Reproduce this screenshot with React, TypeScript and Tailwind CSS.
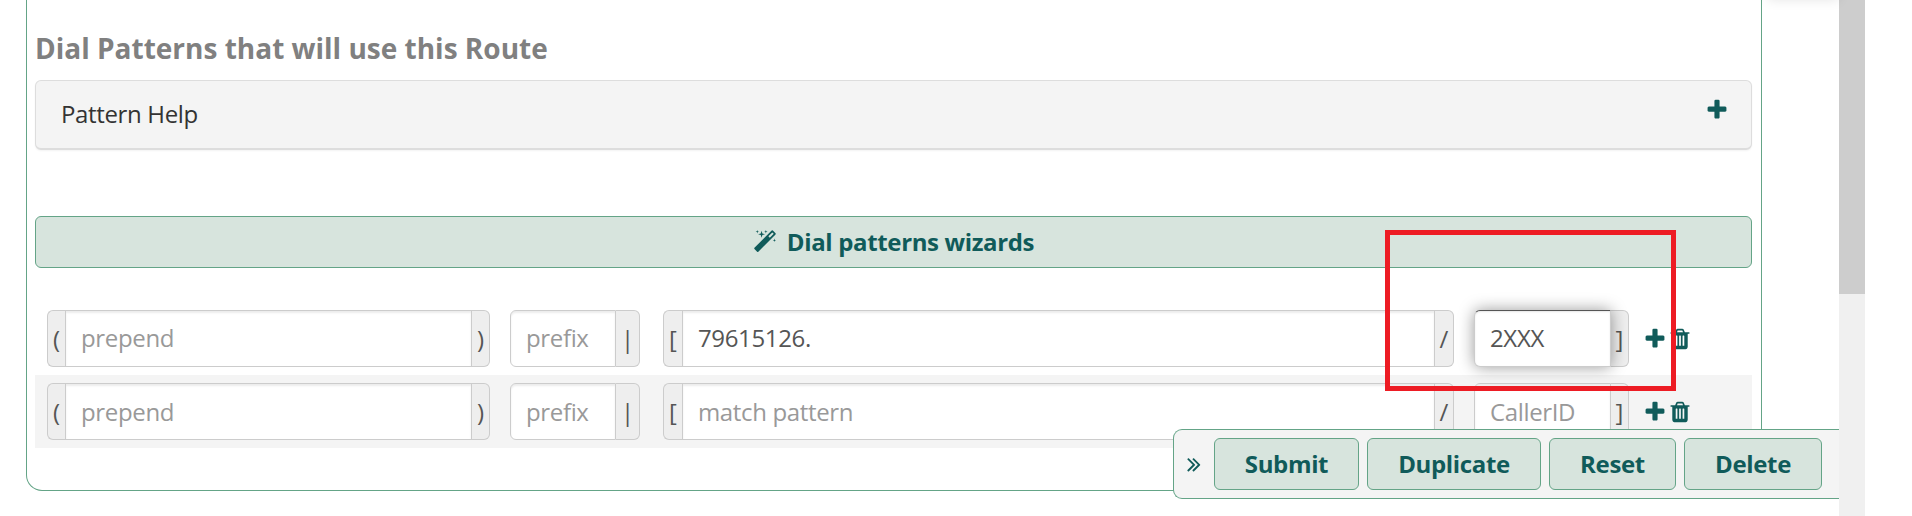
import React from 'react';
import clsx from 'clsx';

interface DialPattern {
  id: number;
  match?: string;
  callerId?: string;
  focused?: boolean;
}

const PATTERNS: DialPattern[] = [
  { id: 1, match: '79615126.', callerId: '2XXX', focused: true },
  { id: 2 },
];

const ACTIONS = [
  { label: 'Submit', width: 'w-[145px]' },
  { label: 'Duplicate', width: 'w-[174px]' },
  { label: 'Reset', width: 'w-[127px]' },
  { label: 'Delete', width: 'w-[138px]' },
];

const ICONS = {
  plus: 'M1600 736v192q0 40-28 68t-68 28h-416v416q0 40-28 68t-68 28h-192q-40 0-68-28t-28-68v-416h-416q-40 0-68-28t-28-68v-192q0-40 28-68t68-28h416v-416q0-40 28-68t68-28h192q40 0 68 28t28 68v416h416q40 0 68 28t28 68z',
  trash:
    'M704 1376v-704q0-14-9-23t-23-9h-64q-14 0-23 9t-9 23v704q0 14 9 23t23 9h64q14 0 23-9t9-23zm256 0v-704q0-14-9-23t-23-9h-64q-14 0-23 9t-9 23v704q0 14 9 23t23 9h64q14 0 23-9t9-23zm256 0v-704q0-14-9-23t-23-9h-64q-14 0-23 9t-9 23v704q0 14 9 23t23 9h64q14 0 23-9t9-23zm-544-992h448l-48-117q-7-9-17-11h-317q-10 2-17 11zm928 32v64q0 14-9 23t-23 9h-96v948q0 83-47 143.5t-113 60.5h-832q-66 0-113-58.5t-47-141.5v-952h-96q-14 0-23-9t-9-23v-64q0-14 9-23t23-9h309l70-167q15-37 54-63t79-26h320q40 0 79 26t54 63l70 167h309q14 0 23 9t9 23z',
  magic:
    'M1254 581l293-293-107-107-293 293zm447-293q0 27-18 45l-1286 1286q-18 18-45 18t-45-18l-198-198q-18-18-18-45t18-45l1286-1286q18-18 45-18t45 18l198 198q18 18 18 45zm-1351-190l98 30-98 30-30 98-30-98-98-30 98-30 30-98zm350 162l196 60-196 60-60 196-60-196-196-60 196-60 60-196zm930 478l98 30-98 30-30 98-30-98-98-30 98-30 30-98zm-640-640l98 30-98 30-30 98-30-98-98-30 98-30 30-98z',
  collapse:
    'M979 960q0 13-10 23l-466 466q-10 10-23 10t-23-10l-50-50q-10-10-10-23t10-23l393-393-393-393q-10-10-10-23t10-23l50-50q10-10 23-10t23 10l466 466q10 10 10 23zm384 0q0 13-10 23l-466 466q-10 10-23 10t-23-10l-50-50q-10-10-10-23t10-23l393-393-393-393q-10-10-10-23t10-23l50-50q10-10 23-10t23 10l466 466q10 10 10 23z',
};

function Icon({ name, className }: { name: keyof typeof ICONS; className?: string }) {
  return (
    <svg viewBox="0 0 1792 1792" className={clsx('w-6 h-6 shrink-0 fill-[#105b5a]', className)}>
      <path d={ICONS[name]} />
    </svg>
  );
}

interface FieldProps {
  className: string;
  placeholder: string;
  before?: string;
  after: string;
  value?: string;
  focused?: boolean;
  beforeWidth?: string;
  afterWidth?: string;
  inputClassName?: string;
}

function Field({
  className,
  placeholder,
  before,
  after,
  value,
  focused,
  beforeWidth = 'w-[19px]',
  afterWidth = 'w-[19px]',
  inputClassName,
}: FieldProps) {
  return (
    <div className={clsx('flex h-[57px] shrink-0', className)}>
      {before && (
        <span
          className={clsx(
            'shrink-0 flex items-center justify-center pt-px border border-r-0 border-[#ccc] rounded-l-[6px] bg-[#eee] text-[#555]',
            beforeWidth
          )}
        >
          {before}
        </span>
      )}
      <input
        type="text"
        defaultValue={value}
        placeholder={placeholder}
        className={clsx(
          'min-w-0 flex-1 px-[15px] border border-[#ccc] bg-white tracking-[-0.35px] text-[#555] placeholder:text-[#999] outline-none',
          inputClassName,
          !before && 'rounded-l-[6px]',
          focused
            ? 'relative z-10 border-t-[#555] shadow-[inset_0_1px_2px_rgba(0,0,0,0.1),0_0_16px_rgba(0,0,0,0.4)]'
            : 'shadow-[inset_0_2px_2px_rgba(0,0,0,0.075)]'
        )}
      />
      <span
        className={clsx(
          'shrink-0 flex items-center justify-center pt-px border border-l-0 border-[#ccc] rounded-r-[6px] bg-[#eee] text-[#555]',
          afterWidth
        )}
      >
        {after}
      </span>
    </div>
  );
}

function PatternRow({ pattern, striped }: { pattern: DialPattern; striped: boolean }) {
  const inputClassName = striped ? undefined : 'pb-[2px]';

  return (
    <div className={clsx('flex items-center h-[73px] pl-3', striped && 'bg-[#f4f4f4]')}>
      <Field
        className="w-[443px]"
        before="("
        after=")"
        beforeWidth="w-[18px]"
        afterWidth="w-[18px]"
        placeholder="prepend"
        inputClassName={inputClassName}
      />
      <Field
        className="w-[130px] ml-5"
        after="|"
        afterWidth="w-[24px]"
        placeholder="prefix"
        inputClassName={inputClassName}
      />
      <Field
        className="w-[791px] ml-[23px]"
        before="["
        after="/"
        placeholder="match pattern"
        value={pattern.match}
        inputClassName={inputClassName}
      />
      <Field
        className="w-[155px] ml-5"
        after="]"
        afterWidth="w-[18px]"
        placeholder="CallerID"
        value={pattern.callerId}
        focused={pattern.focused}
        inputClassName={inputClassName}
      />
      <button className="ml-[14px]">
        <Icon name="plus" />
      </button>
      <button className="ml-px">
        <Icon name="trash" />
      </button>
    </div>
  );
}

function ActionBar() {
  return (
    <div className="absolute left-[1173px] top-[429px] w-[666px] h-[70px] z-20 flex items-center border border-r-0 border-[#64a487] rounded-l-[9px] bg-[#f4f4f4]">
      <button className="w-10 shrink-0 flex justify-center">
        <Icon name="collapse" />
      </button>
      <div className="flex gap-2">
        {ACTIONS.map((action) => (
          <button
            key={action.label}
            className={clsx(
              'h-[52px] border border-[#64a487] rounded-[6px] bg-[#d7e4dd] font-bold tracking-[-0.35px] text-[#105b5a]',
              action.width
            )}
          >
            {action.label}
          </button>
        ))}
      </div>
    </div>
  );
}

export default function App() {
  return (
    <div className="relative flex w-[1912px] h-[516px] overflow-hidden bg-white text-[24px] leading-[34px] font-['Open_Sans','Noto_Sans',sans-serif]">
      <main className="w-[1839px] shrink-0 pl-[26px]">
        <section className="w-[1736px] h-[491px] pl-2 pr-[9px] border border-t-0 border-[#64a487] rounded-b-[16px]">
          <h3 className="h-20 pt-[28px] text-[28px] leading-[40px] font-bold text-[#808080]">
            Dial Patterns that will use this Route
          </h3>
          <div className="flex justify-between h-[70px] pl-[25px] pr-[22px] border border-b-2 border-[#ddd] rounded-[6px] bg-[#f4f4f4] shadow-[0_1px_2px_rgba(0,0,0,0.05)]">
            <span className="pt-[16px] tracking-[-0.35px] text-[#333]">Pattern Help</span>
            <Icon name="plus" className="mt-[17px]" />
          </div>
          <button className="mt-[66px] w-full h-[52px] flex items-center justify-center gap-[10px] border border-[#64a487] rounded-[6px] bg-[#d7e4dd] font-bold tracking-[-0.35px] text-[#105b5a]">
            <Icon name="magic" />
            Dial patterns wizards
          </button>
          <div className="mt-[34px]">
            {PATTERNS.map((pattern, index) => (
              <PatternRow key={pattern.id} pattern={pattern} striped={index % 2 === 1} />
            ))}
          </div>
        </section>
      </main>

      {/* page scrollbar */}
      <div className="w-[26px] h-full bg-[#f0f0f0]">
        <div className="h-[294px] bg-[#cdcdcd]" />
      </div>

      {/* header shadow falling beside the panel */}
      <div className="absolute left-[1768px] -top-5 w-[71px] h-5 shadow-[0_0_12px_rgba(0,0,0,0.1)]" />
      <ActionBar />
      <div className="absolute left-[1385px] top-[230px] w-[291px] h-[161px] z-30 border-[5px] border-[#ed1c24] pointer-events-none" />
    </div>
  );
}
